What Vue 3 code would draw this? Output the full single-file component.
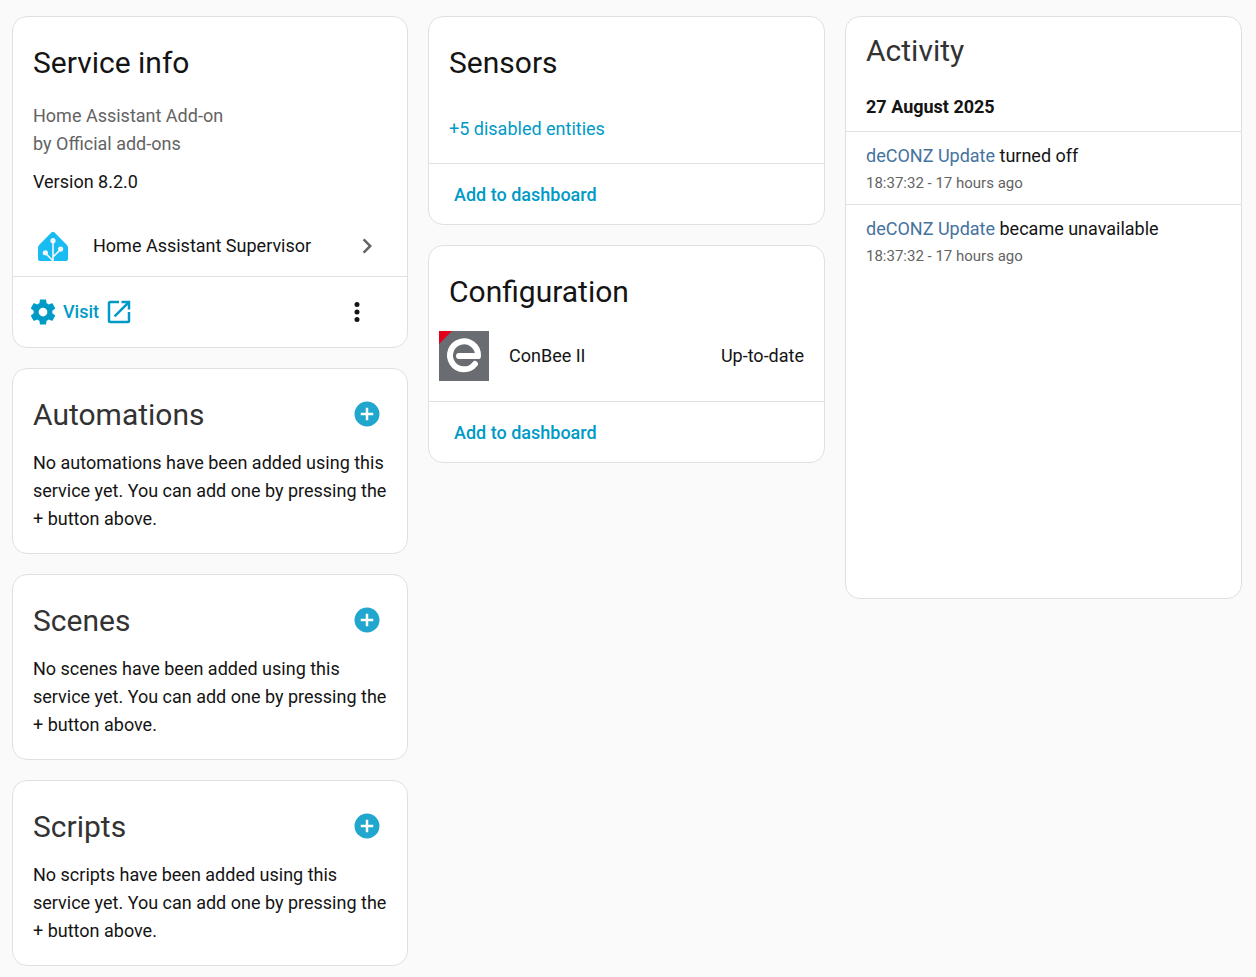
<script setup>
const helpers = [
  { title: 'Automations', noun: 'automations' },
  { title: 'Scenes', noun: 'scenes' },
  { title: 'Scripts', noun: 'scripts' },
]
const events = [
  { entity: 'deCONZ Update', action: 'turned off', time: '18:37:32 - 17 hours ago' },
  { entity: 'deCONZ Update', action: 'became unavailable', time: '18:37:32 - 17 hours ago' },
]
</script>

<template>
  <main class="page">
    <div class="column">
      <section class="card">
        <h1 class="title">Service info</h1>
        <div class="info">
          <p class="muted">Home Assistant Add-on</p>
          <p class="muted">by Official add-ons</p>
          <p class="version">Version 8.2.0</p>
        </div>
        <a class="integration" href="#">
          <svg class="brand" viewBox="0 0 240 240" aria-hidden="true">
            <path fill="#18bcf2" d="M240 224.8c0 8.2-6.8 15-15 15H15c-8.2 0-15-6.800-15-15v-90c0-8.200 4.800-19.800 10.600-25.600L109.400 10.400c5.800-5.800 15.400-5.800 21.200 0l98.800 98.800c5.800 5.800 10.600 17.400 10.600 25.600z" />
            <g fill="none" stroke="#f2f4f9" stroke-width="13">
              <path d="M120 240V78M120 238l-62-62M120 208l62-62" />
            </g>
            <g fill="#f2f4f9">
              <circle cx="120" cy="77" r="21" />
              <circle cx="59" cy="174" r="21" />
              <circle cx="181" cy="144" r="21" />
            </g>
          </svg>
          <span class="grow">Home Assistant Supervisor</span>
          <svg class="icon-30 chevron" viewBox="0 0 24 24" aria-hidden="true">
            <path d="M8.590 16.580L13.170 12L8.590 7.410L10 6l6 6l-6 6z" />
          </svg>
        </a>
        <footer class="actions service-actions">
          <a class="visit" href="#">
            <svg class="icon-30" viewBox="0 0 24 24" aria-hidden="true">
              <path d="M12 15.500A3.500 3.500 0 0 1 8.500 12A3.500 3.500 0 0 1 12 8.500a3.500 3.500 0 0 1 3.500 3.500a3.500 3.500 0 0 1-3.500 3.500m7.430-2.530c.04-.32.07-.64.07-.97s-.03-.66-.07-1l2.110-1.630c.19-.15.24-.42.12-.64l-2-3.460c-.12-.22-.39-.31-.61-.22l-2.490 1c-.52-.39-1.060-.73-1.690-.98l-.37-2.650A.506.506 0 0 0 14 2h-4c-.25 0-.46.18-.5.420l-.37 2.650c-.63.25-1.170.59-1.690.98l-2.490-1c-.22-.09-.49 0-.61.220l-2 3.460c-.13.220-.07.490.12.640L4.570 11c-.04.340-.07.670-.07 1s.03.650.07.970l-2.110 1.660c-.19.150-.25.420-.12.640l2 3.460c.12.220.39.300.61.220l2.490-1.010c.52.400 1.060.740 1.690.990l.37 2.650c.04.240.25.420.5.420h4c.25 0 .46-.18.5-.42l.37-2.650c.63-.26 1.170-.59 1.690-.99l2.490 1.010c.22.080.49 0 .61-.22l2-3.460c.12-.22.07-.49-.12-.64z" />
            </svg>
            <span>Visit</span>
            <svg class="icon-30" viewBox="0 0 24 24" aria-hidden="true">
              <path d="M14 3v2h3.590l-9.830 9.830l1.410 1.410L19 6.410V10h2V3m-2 16H5V5h7V3H5a2 2 0 0 0-2 2v14a2 2 0 0 0 2 2h14a2 2 0 0 0 2-2v-7h-2z" />
            </svg>
          </a>
          <button class="icon-button" type="button" aria-label="Menu">
            <svg class="icon-30" viewBox="0 0 24 24" aria-hidden="true">
              <path d="M12 16a2 2 0 0 1 2 2a2 2 0 0 1-2 2a2 2 0 0 1-2-2a2 2 0 0 1 2-2m0-6a2 2 0 0 1 2 2a2 2 0 0 1-2 2a2 2 0 0 1-2-2a2 2 0 0 1 2-2m0-6a2 2 0 0 1 2 2a2 2 0 0 1-2 2a2 2 0 0 1-2-2a2 2 0 0 1 2-2" />
            </svg>
          </button>
        </footer>
      </section>

      <section v-for="item in helpers" :key="item.title" class="card">
        <header class="helper-header">
          <h1>{{ item.title }}</h1>
          <button class="icon-button add" type="button" :aria-label="'Add to ' + item.noun">
            <svg class="icon-30" viewBox="0 0 24 24" aria-hidden="true">
              <path d="M17 13h-4v4h-2v-4H7v-2h4V7h2v4h4m-5-9A10 10 0 0 0 2 12a10 10 0 0 0 10 10a10 10 0 0 0 10-10A10 10 0 0 0 12 2" />
            </svg>
          </button>
        </header>
        <p class="helper-text">
          No {{ item.noun }} have been added using this service yet. You can add one by pressing the + button above.
        </p>
      </section>
    </div>

    <div class="column">
      <section class="card">
        <h1 class="title">Sensors</h1>
        <button class="show-more" type="button">+5 disabled entities</button>
        <footer class="actions">
          <button class="text-button" type="button">Add to dashboard</button>
        </footer>
      </section>

      <section class="card">
        <h1 class="title">Configuration</h1>
        <div class="entity">
          <svg class="entity-logo" viewBox="0 0 50 50" aria-hidden="true">
            <path fill="#696c70" d="M0 0h50v50H0z" />
            <path fill="#e2001a" d="M0 0h13L0 13z" />
            <path fill="none" stroke="#fff" stroke-width="6" stroke-linecap="round" stroke-linejoin="round" d="M20 25H39A14 14 0 1 0 36 33" />
          </svg>
          <span class="grow">ConBee II</span>
          <span>Up-to-date</span>
        </div>
        <footer class="actions">
          <button class="text-button" type="button">Add to dashboard</button>
        </footer>
      </section>
    </div>

    <div class="column">
      <section class="card activity">
        <h1>Activity</h1>
        <h2>27 August 2025</h2>
        <ul>
          <li v-for="event in events" :key="event.action">
            <p><a href="#">{{ event.entity }}</a> {{ event.action }}</p>
            <p class="time">{{ event.time }}</p>
          </li>
        </ul>
      </section>
    </div>
  </main>
</template>

<style>
body {
  margin: 0;
  background: #fafafa;
}
</style>

<style scoped>
.page {
  display: grid;
  grid-template-columns: 396fr 397fr 397fr;
  align-items: start;
  gap: 20px;
  padding: 16px 14px 11px 12px;
  color: #141414;
  font-family: Roboto, "Noto Sans", sans-serif;
  font-size: 18px;
  line-height: 28px;
}
.column {
  display: flex;
  flex-direction: column;
  gap: 20px;
  min-width: 0;
}
.card {
  background: #fff;
  border: 1px solid #e0e0e0;
  border-radius: 15px;
}
h1, h2, p, ul {
  margin: 0;
  padding: 0;
}
h1 {
  font-size: 30px;
  font-weight: 400;
  line-height: 40px;
}
.title {
  padding: 26px 20px 0;
}
.info {
  padding: 19px 20px 20px;
}
.muted {
  color: #636363;
}
.version {
  margin-top: 10px;
}
.integration {
  display: flex;
  align-items: center;
  height: 60px;
  padding: 0 25px;
  color: inherit;
  text-decoration: none;
}
.brand {
  width: 30px;
  height: 30px;
  margin-right: 25px;
}
.grow {
  flex: 1;
}
.icon-30 {
  display: block;
  flex: none;
  width: 30px;
  height: 30px;
  fill: currentColor;
}
.chevron {
  color: #636363;
}
.actions {
  display: flex;
  align-items: center;
  padding: 11px 15px 9px;
  border-top: 1px solid #e0e0e0;
}
.service-actions {
  justify-content: space-between;
  padding: 10px 25px 10px 15px;
}
button {
  margin: 0;
  padding: 0;
  border: 0;
  background: none;
  color: inherit;
  font: inherit;
  cursor: pointer;
}
.visit {
  display: flex;
  align-items: center;
  gap: 5px;
  color: #009ac7;
  font-weight: 500;
  text-decoration: none;
}
.icon-button {
  display: flex;
  align-items: center;
  justify-content: center;
  width: 50px;
  height: 50px;
}
.helper-header {
  display: flex;
  align-items: flex-end;
  justify-content: space-between;
  padding: 20px 15px 0 20px;
  color: #333;
}
.helper-header h1 {
  padding-bottom: 4px;
}
.add {
  color: #21a6ce;
}
.helper-text {
  padding: 10px 20px 20px;
}
.show-more {
  display: block;
  padding: 32px 20px 20px;
  color: #009ac7;
}
.text-button {
  height: 40px;
  padding: 0 10px;
  color: #009ac7;
  font-weight: 500;
}
.entity {
  display: flex;
  align-items: center;
  padding: 19px 20px 20px 10px;
}
.entity-logo {
  width: 50px;
  height: 50px;
  margin-right: 20px;
}
.activity {
  min-height: 581px;
}
.activity h1 {
  padding: 14px 20px 0;
  color: #333;
}
h2 {
  padding: 22px 20px 10px;
  font-size: 18px;
  font-weight: 700;
  line-height: 28px;
}
ul {
  list-style: none;
}
li {
  padding: 10px 20px 8px;
  border-top: 1px solid #e0e0e0;
}
li a {
  color: #44739e;
  text-decoration: none;
}
.time {
  color: #636363;
  font-size: 15px;
  line-height: 26px;
}
</style>
